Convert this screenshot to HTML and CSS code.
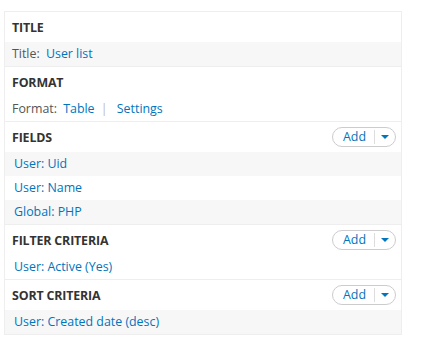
FILE: index.html
```html
<!DOCTYPE html>
<html lang="en">
<head>
	<meta charset="UTF-8">
	<title>Views</title>
	<link rel="stylesheet" href="styles.css">
</head>
<body>
	<div class="views-panel">
		<section class="bucket">
			<h3 class="bucket-title">Title</h3>
			<div class="row odd"><span class="label">Title:</span> <a href="#">User list</a></div>
		</section>
		<section class="bucket">
			<h3 class="bucket-title">Format</h3>
			<div class="row"><span class="label">Format:</span> <a href="#">Table</a> <span class="sep">|</span> <a href="#">Settings</a></div>
		</section>
		<section class="bucket">
			<div class="bucket-head">
				<h3 class="bucket-title">Fields</h3>
				<span class="dropbutton"><a href="#">Add</a><span class="toggle"></span></span>
			</div>
			<div class="row item odd"><a href="#">User: Uid</a></div>
			<div class="row item"><a href="#">User: Name</a></div>
			<div class="row item odd"><a href="#">Global: PHP</a></div>
		</section>
		<section class="bucket">
			<div class="bucket-head">
				<h3 class="bucket-title">Filter criteria</h3>
				<span class="dropbutton"><a href="#">Add</a><span class="toggle"></span></span>
			</div>
			<div class="row item"><a href="#">User: Active (Yes)</a></div>
		</section>
		<section class="bucket">
			<div class="bucket-head">
				<h3 class="bucket-title">Sort criteria</h3>
				<span class="dropbutton"><a href="#">Add</a><span class="toggle"></span></span>
			</div>
			<div class="row item odd"><a href="#">User: Created date (desc)</a></div>
		</section>
	</div>
</body>
</html>
```

FILE: styles.css
```css
body {
	margin: 0;
	background: #fff;
	font-family: "Open Sans", "Noto Sans", sans-serif;
	font-size: 12.4px;
	color: #555;
}

a {
	color: #0074bd;
	text-decoration: none;
}

.views-panel {
	width: 396px;
	margin: 11px 0 0 4px;
	border: 1px solid #eee;
}

.bucket {
	border-bottom: 1px solid #eee;
}

.bucket:last-child {
	border-bottom: 0;
}

.bucket-head {
	display: flex;
	align-items: center;
	justify-content: space-between;
	padding-right: 5px;
}

.bucket-title {
	margin: 0;
	height: 30px;
	line-height: 31px;
	padding-left: 7px;
	font-size: 12.4px;
	font-weight: bold;
	text-transform: uppercase;
	letter-spacing: -0.15px;
	color: #333;
}

.row {
	height: 24px;
	line-height: 24px;
	padding-left: 7px;
}

.row.item {
	padding-left: 9px;
}

.odd {
	background: #f7f7f7;
}

.label {
	margin-right: 3px;
}

.sep {
	color: #bbb;
	margin: 0 6px 0 3px;
}

.dropbutton {
	display: flex;
	align-items: center;
	height: 18px;
	width: 62px;
	border: 1px solid #ccc;
	border-radius: 10px;
	background: #fff;
}

.dropbutton a {
	flex: 1;
	text-align: center;
	padding-left: 2px;
	border-right: 1px solid #ddd;
	height: 14px;
	line-height: 14px;
}

.toggle {
	width: 20px;
	display: flex;
	justify-content: center;
}

.toggle::before {
	content: "";
	border-left: 4px solid transparent;
	border-right: 4px solid transparent;
	border-top: 4px solid #0074bd;
}
```
